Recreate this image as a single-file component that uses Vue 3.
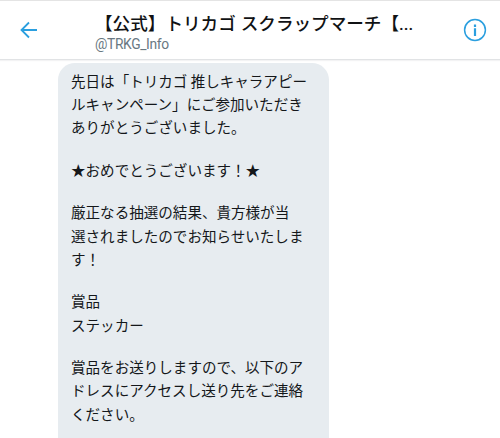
<script setup>
import { reactive } from 'vue'

const account = reactive({
  name: '【公式】トリカゴ スクラップマーチ【',
  handle: '@TRKG_Info'
})

// each paragraph is a list of lines
const paragraphs = reactive([
  ['先日は「トリカゴ 推しキャラアピー', 'ルキャンペーン」にご参加いただき', 'ありがとうございました。'],
  ['★おめでとうございます！★'],
  ['厳正なる抽選の結果、貴方様が当', '選されましたのでお知らせいたしま', 'す！'],
  ['賞品', 'ステッカー'],
  ['賞品をお送りしますので、以下のア', 'ドレスにアクセスし送り先をご連絡', 'ください。']
])
</script>

<template>
  <div class="screen">
    <header class="top-bar">
      <button class="icon-button back" type="button" aria-label="戻る">
        <svg width="18" height="18" viewBox="0 0 18 18">
          <path d="M17 9H2M9 1.5L1.5 9L9 16.5" />
        </svg>
      </button>
      <div class="account">
        <h1 class="name">{{ account.name }}<span class="dots">...</span></h1>
        <p class="handle">{{ account.handle }}</p>
      </div>
      <button class="icon-button info" type="button" aria-label="情報">
        <svg width="24" height="24" viewBox="0 0 24 24">
          <circle cx="12" cy="12" r="10.4" />
          <path class="stem" d="M12 10.3V18M12 6.6V8.9" />
        </svg>
      </button>
    </header>
    <main class="messages">
      <div class="bubble">
        <p v-for="(lines, i) in paragraphs" :key="i">
          <span v-for="line in lines" :key="line" class="line">{{ line }}</span>
        </p>
      </div>
    </main>
  </div>
</template>

<style>
body {
  margin: 0;
  background: #fff;
}
</style>

<style scoped>
.screen {
  width: 100%;
  height: 438px;
  overflow: hidden;
  display: flex;
  flex-direction: column;
  box-sizing: border-box;
  border-top: 1px solid #e4e4e4;
  background: #fff;
  font-family: Roboto, "Noto Sans CJK JP", sans-serif;
}

.top-bar {
  flex: none;
  display: flex;
  align-items: center;
  height: 59px;
  box-sizing: border-box;
  padding: 0 13px 0 20px;
  border-bottom: 1px solid #e1e3e5;
  box-shadow: 0 1px 1px #f3f3f4;
}

.icon-button {
  display: flex;
  padding: 0;
  border: 0;
  background: none;
}

.icon-button svg {
  fill: none;
  stroke: #2b9fdf;
  stroke-width: 1.8;
}

.icon-button .stem {
  stroke-width: 2.2;
}

.info svg {
  stroke-width: 1.5;
}

.account {
  flex: 1;
  margin-left: 57px;
  padding-top: 2px;
  white-space: nowrap;
}

.name {
  margin: 0;
  font-family: "Noto Sans CJK JP", sans-serif;
  font-size: 17.6px;
  font-weight: 500;
  line-height: 24px;
  word-spacing: 1px;
  color: #101214;
}

.dots {
  font-family: Roboto, sans-serif;
  font-size: 17px;
  font-weight: 500;
}

.handle {
  margin: 0;
  font-size: 13.8px;
  line-height: 16px;
  letter-spacing: -0.35px;
  color: #697882;
}

.messages {
  flex: 1;
  padding: 3px 0 0 58px;
}

.bubble {
  width: 271px;
  height: 420px;
  box-sizing: border-box;
  padding: 5.9px 13px;
  border-radius: 17px;
  background: #e7ecf0;
  font-family: "Noto Sans CJK JP", sans-serif;
  font-size: 14.55px;
  line-height: 23.3px;
  color: #14171a;
}

.bubble p {
  margin: 0 0 19.1px;
}

.line {
  display: block;
  white-space: nowrap;
}
</style>
